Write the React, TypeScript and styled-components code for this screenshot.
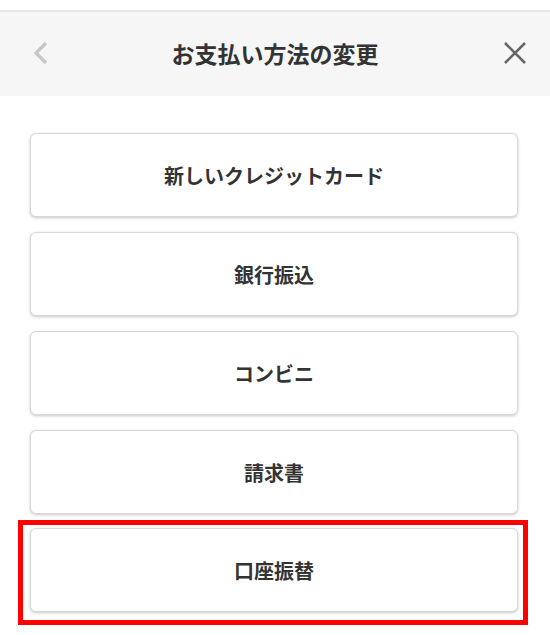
import React from "react";
import styled, { createGlobalStyle } from "styled-components";

const GlobalStyle = createGlobalStyle`
  body {
    margin: 0;
    background: #ffffff;
    font-family: "Noto Sans CJK JP", "Noto Sans", sans-serif;
  }
`;

const Page = styled.div`
  width: 550px;
  padding-top: 10px;
`;

const Header = styled.header`
  height: 84px;
  border-top: 2px solid #e6e6e6;
  background: #f6f6f6;
  display: grid;
  grid-template-columns: 80px 1fr 80px;
  align-items: center;
`;

const IconButton = styled.button<{ align: "left" | "right" }>`
  border: 0;
  background: none;
  padding: 0;
  display: flex;
  justify-content: ${(p) => (p.align === "left" ? "flex-start" : "flex-end")};
  padding-left: ${(p) => (p.align === "left" ? "33px" : "0")};
  padding-right: ${(p) => (p.align === "right" ? "23px" : "0")};
  margin-top: -2px;
  cursor: pointer;
`;

const Title = styled.h1`
  margin: 0;
  text-align: center;
  font-size: 23px;
  font-weight: 700;
  color: #333333;
  margin-top: -2px;
`;

const List = styled.div`
  display: flex;
  flex-direction: column;
  gap: 15px;
  padding: 37px 32px 0 30px;
`;

const Option = styled.button`
  height: 84px;
  width: 100%;
  background: #ffffff;
  border: 1px solid #d8d8d8;
  border-radius: 6px;
  box-shadow: 0 1px 3px rgba(0, 0, 0, 0.22);
  font-family: inherit;
  font-size: 20px;
  font-weight: 700;
  color: #333333;
  cursor: pointer;
`;

const Highlight = styled.div`
  margin: -9px -10px 0 -12px;
  border: 5px solid #ff0000;
  padding: 3px 5px 8px 7px;
`;

const options = ["新しいクレジットカード", "銀行振込", "コンビニ", "請求書"];

export default function App() {
  return (
    <Page>
      <GlobalStyle />
      <Header>
        <IconButton align="left" aria-label="戻る">
          <svg width="16" height="24" viewBox="0 0 16 24">
            <path d="M13 2 L3 12 L13 22" fill="none" stroke="#c6c6c6" strokeWidth="3.2" />
          </svg>
        </IconButton>
        <Title>お支払い方法の変更</Title>
        <IconButton align="right" aria-label="閉じる">
          <svg width="24" height="24" viewBox="0 0 24 24">
            <path d="M2 2 L22 22 M22 2 L2 22" fill="none" stroke="#666666" strokeWidth="2.6" />
          </svg>
        </IconButton>
      </Header>
      <List>
        {options.map((o) => (
          <Option key={o}>{o}</Option>
        ))}
        <Highlight>
          <Option>口座振替</Option>
        </Highlight>
      </List>
    </Page>
  );
}
